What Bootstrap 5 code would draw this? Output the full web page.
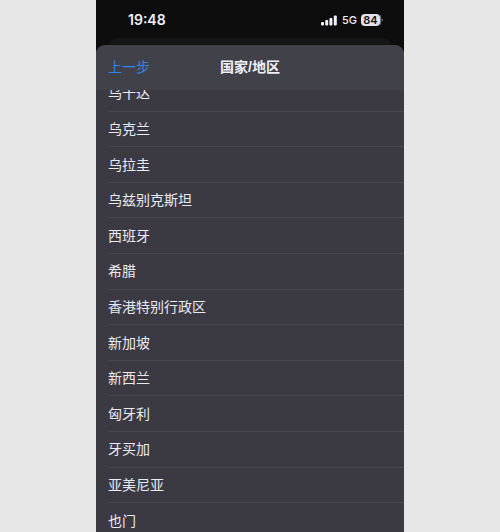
<!DOCTYPE html>
<html lang="zh-CN">
<head>
<meta charset="utf-8">
<meta name="viewport" content="width=device-width, initial-scale=1">
<title>国家/地区</title>
<link href="https://cdn.jsdelivr.net/npm/bootstrap@5.3.0/dist/css/bootstrap.min.css" rel="stylesheet">
<style>
body { background: #e7e7e7; font-family: "Liberation Sans", "Noto Sans CJK SC", sans-serif; font-size: 14px; line-height: 20px; }
.phone { max-width: 308px; background: #0d0d0e; color: #f1f0f8; }
.status-bar { height: 38px; padding: 2px 21px 0 32px; font-family: Inter, sans-serif; }
.clock { font-size: 14px; font-weight: 600; }
.network { font-size: 11px; font-weight: 500; }
.battery { background: #e4e2ea; color: #17171a; border-radius: 4px; width: 19px; height: 12px; font-size: 11px; line-height: 12px; font-weight: 600; text-align: center; }
.sheet-behind { height: 18px; margin: 0 12px -11px; background: #151516; border-radius: 9px 9px 0 0; }
.sheet { background: #3b3a42; border-radius: 9px 9px 0 0; min-height: 0; }
.sheet-header { background: #41414a; height: 45px; padding: 0 12px; display: grid; grid-template-columns: 1fr auto 1fr; border-bottom: 1px solid #44444d; }
.back-btn { color: #2f86e8; font-size: 14px; line-height: 20px; }
.back-btn:hover { color: #5ba4f5; }
.sheet-title { font-size: 14px; line-height: 20px; font-weight: 700; }
.list-window { min-height: 0; }
/* The list is scrolled: its first and last rows run past the window. */
.countries { margin: -14px 0 -6px; padding-left: 12px; }
.countries .list-group-item { flex: 1 1 0; min-height: 0; color: #ebeaf2; border-color: #47474f; }
</style>
</head>
<body class="vh-100 overflow-hidden">
<div class="phone d-flex flex-column w-100 h-100 mx-auto overflow-hidden">
  <div class="status-bar d-flex align-items-center justify-content-between flex-shrink-0">
    <span class="clock">19:48</span>
    <div class="d-flex align-items-center gap-1">
      <svg width="17" height="11" viewBox="0 0 17 11" fill="currentColor" aria-label="信号">
        <rect x="0" y="7" width="3" height="3.5" rx="1"/><rect x="4.2" y="5" width="3" height="5.5" rx="1"/><rect x="8.4" y="3" width="3" height="7.5" rx="1"/><rect x="12.8" y="0.5" width="3" height="10" rx="1"/>
      </svg>
      <span class="network">5G</span>
      <div class="d-flex align-items-center">
        <span class="battery">84</span>
        <svg width="3" height="12" viewBox="0 0 3 12" aria-hidden="true"><path d="M0 0.5Q1 1 1 3V9Q1 11 0 11.5Z" fill="#77767e"/><path d="M1.6 4.3Q3 5 3 6T1.6 7.7Z" fill="#77767e"/></svg>
      </div>
    </div>
  </div>
  <div class="sheet-behind flex-shrink-0"></div>
  <main class="sheet d-flex flex-column flex-grow-1 overflow-hidden position-relative">
    <header class="sheet-header align-items-center flex-shrink-0">
      <button type="button" class="back-btn btn btn-link p-0 border-0 text-decoration-none text-start">上一步</button>
      <h1 class="sheet-title m-0">国家/地区</h1>
    </header>
    <div class="list-window d-flex flex-column flex-grow-1 overflow-hidden">
      <ul class="countries list-group list-group-flush flex-grow-1 rounded-0">
        <li class="list-group-item bg-transparent d-flex align-items-center p-0">乌干达</li>
        <li class="list-group-item bg-transparent d-flex align-items-center p-0">乌克兰</li>
        <li class="list-group-item bg-transparent d-flex align-items-center p-0">乌拉圭</li>
        <li class="list-group-item bg-transparent d-flex align-items-center p-0">乌兹别克斯坦</li>
        <li class="list-group-item bg-transparent d-flex align-items-center p-0">西班牙</li>
        <li class="list-group-item bg-transparent d-flex align-items-center p-0">希腊</li>
        <li class="list-group-item bg-transparent d-flex align-items-center p-0">香港特别行政区</li>
        <li class="list-group-item bg-transparent d-flex align-items-center p-0">新加坡</li>
        <li class="list-group-item bg-transparent d-flex align-items-center p-0">新西兰</li>
        <li class="list-group-item bg-transparent d-flex align-items-center p-0">匈牙利</li>
        <li class="list-group-item bg-transparent d-flex align-items-center p-0">牙买加</li>
        <li class="list-group-item bg-transparent d-flex align-items-center p-0">亚美尼亚</li>
        <li class="list-group-item bg-transparent d-flex align-items-center p-0">也门</li>
      </ul>
    </div>
  </main>
</div>
<script src="https://cdn.jsdelivr.net/npm/bootstrap@5.3.0/dist/js/bootstrap.bundle.min.js"></script>
</body>
</html>
